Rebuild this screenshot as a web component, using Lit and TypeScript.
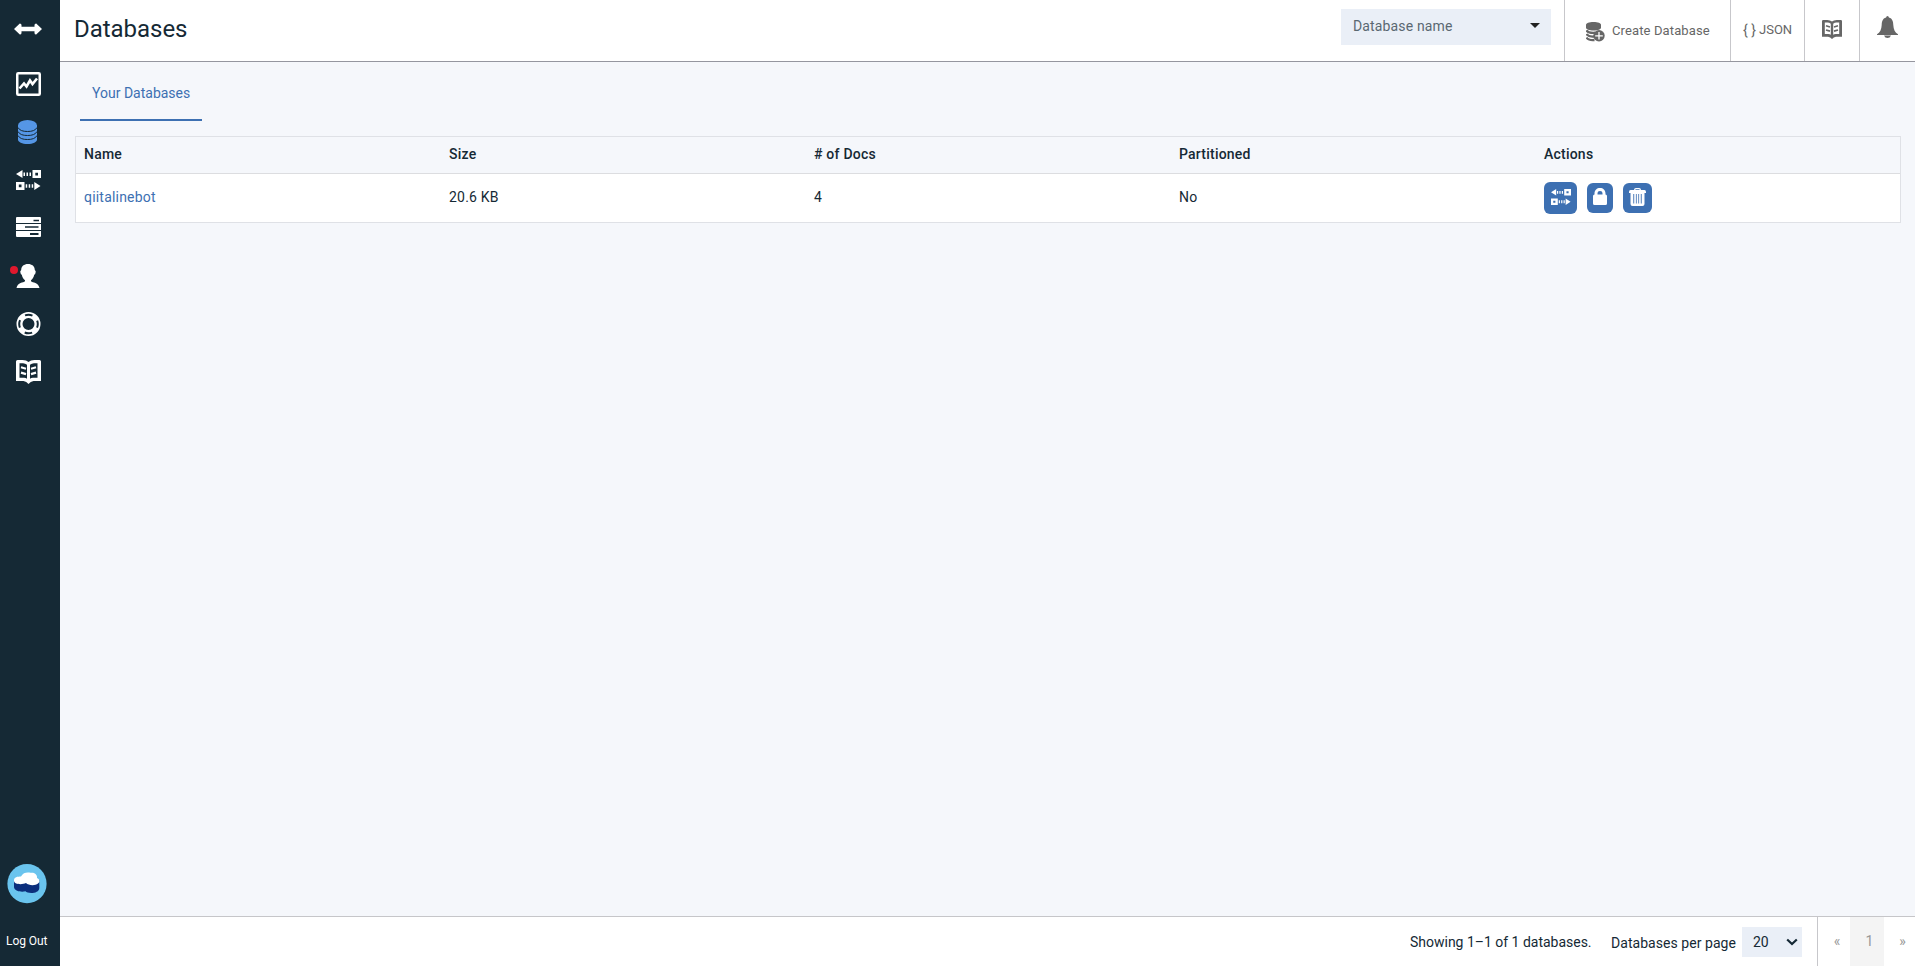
import { LitElement, html, svg, css } from "lit";
import { customElement, property } from "lit/decorators.js";

const book = svg`
  <path fill="currentColor" fill-rule="evenodd" d="M0 1.500Q0 0 1.500 0H6.500Q10.500 0 12.500 2Q14.500 0 18.500 0H23.500Q25 0 25 1.500V21H17.500Q14.500 21.300 12.500 24Q10.500 21.300 7.500 21H0ZM3.500 3.200V17.800H8Q9.800 17.800 11 18.700V4.700Q9 3 6.500 3.200ZM21.500 3.200V17.800H17Q15.200 17.800 14 18.700V4.700Q16 3 18.500 3.200Z"/>
  <path stroke="currentColor" stroke-width="2.200" fill="none" d="M5 7.300L10 8.800M5 12.600L10 14.100M20 7.300L15 8.800M20 12.600L15 14.100"/>`;

const replicate = svg`
  <path fill="currentColor" fill-rule="evenodd" d="M0 4L6.500 0V8ZM7.500 2.500H9V6H7.500ZM10.500 2.500H12V6H10.500ZM13.500 2.500H15V6H13.500ZM16.500 0H25V8H16.500ZM19.300 2.700V5.400H22V2.700ZM0 12H8.500V20H0ZM2.800 14.600V17.300H5.500V14.600ZM9.700 14.200H11.200V17.700H9.700ZM12.700 14.200H14.200V17.700H12.700ZM15.700 14.200H17.200V17.700H15.700ZM18.300 12L24.500 16L18.300 20Z"/>`;

const icons = {
  arrows: svg`<svg width="28" height="12" viewBox="0 0 28 12"><path fill="currentColor" d="M0 6L5.800 .4Q7.500 .4 7.500 2V3.700H20.500V2Q20.500 .4 22.200 .4L28 6L22.200 11.600Q20.500 11.600 20.500 10V8.300H7.500V10Q7.500 11.600 5.800 11.600Z"/></svg>`,
  chart: svg`<svg width="25" height="24" viewBox="0 0 25 24"><rect x="1.250" y="1.250" width="22.500" height="21.500" rx="1" fill="none" stroke="currentColor" stroke-width="2.500"/><path fill="none" stroke="currentColor" stroke-width="2.600" d="M3.500 16.500L8 11.500L10.500 14.500L14 8.500L16.500 12L21 6.500"/></svg>`,
  database: svg`<svg width="19" height="24" viewBox="0 0 19 24"><path fill="currentColor" d="M0 5V19.500C0 22 4 24 9.500 24S19 22 19 19.500V5Z"/><ellipse cx="9.500" cy="5.500" rx="9.500" ry="5.500" fill="currentColor"/><path fill="none" stroke="#152935" stroke-width="1" d="M0 7.500C1.500 10.500 5 11.500 9.500 11.500S17.500 10.500 19 7.500M0 11.500C1.500 14.500 5 15.500 9.500 15.500S17.500 14.500 19 11.500M0 15.500C1.500 18.500 5 19.500 9.500 19.500S17.500 18.500 19 15.500"/></svg>`,
  replicate: svg`<svg width="25" height="20" viewBox="0 0 25 20">${replicate}</svg>`,
  servers: svg`<svg width="25" height="20" viewBox="0 0 25 20"><path fill="currentColor" fill-rule="evenodd" d="M1 0H24Q25 0 25 1V6H0V1Q0 0 1 0ZM17.500 2.700V4.200H23V2.700ZM0 7H25V13H0ZM9 9.200V10.800H22.500V9.200ZM0 14H25V19Q25 20 24 20H1Q0 20 0 19ZM14 16V18H22.500V16Z"/></svg>`,
  person: svg`<svg width="24" height="24" viewBox="0 0 24 24"><path fill="currentColor" d="M12 0C16 0 18.800 2.200 18.800 6Q20.300 7 19.500 9Q19.200 10.500 18.200 10.800C17.800 13.500 16.500 15 15 16.300V17.300C16.500 18.800 22.500 18.500 23.500 24H.5C1.500 18.500 7.500 18.800 9 17.300V16.300C7.500 15 6.200 13.500 5.800 10.800Q4.800 10.500 4.500 9Q3.700 7 5.200 6C5.200 2.200 8 0 12 0Z"/></svg>`,
  support: svg`<svg width="25" height="24" viewBox="0 0 25 24"><circle cx="12.500" cy="12" r="9" fill="none" stroke="currentColor" stroke-width="6"/><circle cx="12.500" cy="12" r="9.300" fill="none" stroke="#152935" stroke-width="2" stroke-dasharray="7.600 7.008" stroke-dashoffset="3.800"/></svg>`,
  book: svg`<svg width="25" height="24" viewBox="0 0 25 24">${book}</svg>`,
};

@customElement("side-nav")
export class SideNav extends LitElement {
  static styles = css`
    :host { display: flex; flex-direction: column; width: 60px; background: #152935; color: #fff; }
    .item { display: flex; align-items: center; box-sizing: border-box; height: 48px; padding-left: 16px; position: relative; }
    .toggle { height: 59px; padding: 0 0 1px 14px; margin-bottom: 1px; }
    .active { color: #5596e6; padding-left: 18px; }
    .servers { padding-bottom: 2px; }
    .dot { position: absolute; left: 10px; top: 14px; width: 8px; height: 8px; border-radius: 50%; background: #e0182d; }
    .logo { margin-top: auto; padding-left: 7px; height: 40px; }
    .logout { margin: 29px 0 17px; padding-left: 6px; font-size: 12px; line-height: 16px; letter-spacing: -.05px; white-space: nowrap; }
    svg { display: block; }
  `;
  render() {
    const entries = ["chart", "database", "replicate", "servers", "person", "support", "book"] as const;
    return html`
      <div class="item toggle">${icons.arrows}</div>
      ${entries.map((name) => html`<div class="item ${name} ${name === "database" ? "active" : ""}">
        ${icons[name]}${name === "person" ? html`<span class="dot"></span>` : ""}
      </div>`)}
      <div class="logo">
        <svg width="40" height="40" viewBox="0 0 40 40">
          <circle cx="20" cy="19.700" r="19.600" fill="#6ac4ee"/>
          <path fill="#0b2e7c" d="M7 16H32.300V24C32.300 30 20.500 30 18.500 27.300C14 28.500 7 27 7 23Z"/>
          <path fill="#fff" d="M7 17C6.500 13 11 12.500 14 12.500C16 8 21 8 23.500 8.800C28 8 30.500 11 30 14C32.500 15 33.500 18 31 19.500C28 22 21.500 21.500 19 19C15 21 7.500 20.500 7 17Z"/>
        </svg>
      </div>
      <div class="logout">Log Out</div>`;
  }
}

@customElement("top-bar")
export class TopBar extends LitElement {
  static styles = css`
    :host { display: flex; height: 61px; background: #fff; border-bottom: 1px solid #95969f; }
    .title { flex: 1; margin: 0; padding: 13px 0 0 14px; font-size: 24px; line-height: 32px; font-weight: 400; letter-spacing: -.03px; }
    .search { display: flex; align-items: center; justify-content: space-between; box-sizing: border-box; width: 210px; height: 36px; margin: 9px 13px 0 0; padding: 0 11px 0 12px; background: #eaeff7; color: #5a6872; font-size: 14px; }
    .label { padding-bottom: 2px; letter-spacing: .15px; }
    .caret { border: 5px solid transparent; border-top-color: #222; border-bottom: 0; margin-bottom: 3px; }
    .cell { display: flex; box-sizing: border-box; border-left: 1px solid #c7c7cb; color: #666; white-space: nowrap; }
    .create { width: 166px; padding: 22px 0 0 21px; font-size: 13px; line-height: 18px; }
    .create span { padding-left: 7px; letter-spacing: .12px; }
    .json { width: 74px; padding: 21px 0 0 12px; font-size: 13px; line-height: 18px; }
    .braces { width: 16px; font-size: 14px; }
    .docs { width: 55px; padding: 20px 0 0 17px; }
    .bell { width: 56px; padding: 16px 0 0 17px; }
  `;
  render() {
    return html`
      <h1 class="title">Databases</h1>
      <div class="search"><span class="label">Database name</span><span class="caret"></span></div>
      <div class="cell create">
        <svg width="19" height="20" viewBox="0 0 19 20">
          <path fill="currentColor" d="M0 3C0 1 3 0 7.500 0S15 1 15 3V5.500C15 7.500 12 8.500 7.500 8.500S0 7.500 0 5.500Z"/>
          <path fill="none" stroke="currentColor" stroke-width="2.400" d="M.5 8.300C2 11 6 11 9 10.800M.5 12C2 14.500 5 14.800 8 14.500M.5 15.500C2 18 5 18.300 8.500 18"/>
          <circle cx="13" cy="13.800" r="5.700" fill="currentColor"/>
          <path stroke="#fff" stroke-width="1.300" d="M13 10V17.600M9.200 13.800H16.800"/>
        </svg>
        <span>Create Database</span>
      </div>
      <div class="cell json"><span class="braces">{ }</span><span class="word">JSON</span></div>
      <div class="cell docs"><svg width="20" height="19" viewBox="0 0 25 24" preserveAspectRatio="none">${book}</svg></div>
      <div class="cell bell">
        <svg width="21" height="22" viewBox="0 0 21 22"><path fill="currentColor" d="M10.500 0Q11.800 0 11.900 1.600C15.500 2.400 16.200 6 16.300 9C16.500 13.500 18 16.500 21 18.200V19H0V18.200C3 16.500 4.500 13.500 4.700 9C4.800 6 5.500 2.400 9.100 1.600Q9.200 0 10.500 0ZM7 19.500H14Q13 22 10.500 22T7 19.500Z"/></svg>
      </div>`;
  }
}

@customElement("database-table")
export class DatabaseTable extends LitElement {
  static styles = css`
    :host { display: block; border: 1px solid #dfe1e6; font-size: 14px; line-height: 18px; }
    .row { display: grid; grid-template-columns: repeat(5, 365px); align-items: center; height: 48px; background: #fff; }
    .head { height: 36px; background: #f5f7fb; border-bottom: 1px solid #dcdde0; font-weight: 500; }
    .cell { padding-left: 8px; letter-spacing: .2px; }
    .head .cell { padding-bottom: 2px; letter-spacing: .22px; }
    .text { padding-bottom: 2px; }
    .link { color: #3d70b2; }
    .actions { display: flex; align-items: center; gap: 10px; padding: 0 0 1px 8px; }
    .btn { display: flex; align-items: center; justify-content: center; height: 30px; border-radius: 6px; background: #3d70b2; color: #fff; }
    .wide { width: 33px; height: 32px; }
    .lock { width: 26px; }
    .trash { width: 29px; }
    .btn svg { margin-bottom: 2px; }
  `;
  @property({ attribute: false }) rows = [{ name: "qiitalinebot", size: "20.6 KB", docs: "4", partitioned: "No" }];
  render() {
    return html`
      <div class="row head">
        ${["Name", "Size", "# of Docs", "Partitioned", "Actions"].map((t) => html`<div class="cell">${t}</div>`)}
      </div>
      ${this.rows.map((r) => html`<div class="row">
        <div class="cell text link">${r.name}</div>
        <div class="cell text">${r.size}</div>
        <div class="cell text">${r.docs}</div>
        <div class="cell text">${r.partitioned}</div>
        <div class="actions">
          <span class="btn wide"><svg width="20" height="16" viewBox="0 0 25 20">${replicate}</svg></span>
          <span class="btn lock"><svg width="14" height="17" viewBox="0 0 14 17"><path fill="currentColor" fill-rule="evenodd" d="M1.500 6.500V5.500C1.500 2 4 0 7 0S12.500 2 12.500 5.500V6.500Q14 6.500 14 8V15.500Q14 17 12.500 17H1.500Q0 17 0 15.500V8Q0 6.500 1.500 6.500ZM4.500 6.500H9.500V5.500C9.500 3.800 8.500 3 7 3S4.500 3.800 4.500 5.500Z"/></svg></span>
          <span class="btn trash"><svg width="17" height="18" viewBox="0 0 17 18"><path fill="currentColor" fill-rule="evenodd" d="M5 2Q5 0 7 0H10Q12 0 12 2H15.500Q17 2 17 4V5H0V4Q0 2 1.500 2ZM6.500 2H10.500V1.300H6.500ZM1.500 5H15.500V16Q15.500 18 13.500 18H3.500Q1.500 18 1.500 16ZM4.300 6V15.500H5.200V6ZM6.900 6V15.500H7.700V6ZM9.300 6V15.500H10.100V6ZM11.800 6V15.500H12.700V6Z"/></svg></span>
        </div>
      </div>`)}`;
  }
}

@customElement("page-footer")
export class PageFooter extends LitElement {
  static styles = css`
    :host { display: flex; justify-content: flex-end; height: 49px; background: #fff; border-top: 1px solid #c6c6c9; font-size: 14px; line-height: 18px; white-space: nowrap; }
    .showing { width: 201px; padding-top: 16px; letter-spacing: -.01px; }
    .per { width: 131px; padding-top: 17px; letter-spacing: .05px; }
    .select { display: flex; align-items: center; justify-content: space-between; box-sizing: border-box; width: 60px; height: 30px; margin: 10px 15px 0 0; padding: 0 4px 0 11px; background: #eaeff7; }
    .pages { display: flex; width: 97px; border-left: 1px solid #c7c7cb; color: #999; text-align: center; }
    .page { box-sizing: border-box; width: 32px; padding: 15px 0 0 6px; }
    .current { background: #f4f4f4; padding-left: 5px; width: 34px; }
    .next { width: 31px; }
  `;
  render() {
    return html`
      <div class="showing">Showing 1–1 of 1 databases.</div>
      <div class="per">Databases per page</div>
      <div class="select"><span>20</span><svg width="12" height="8" viewBox="0 0 12 8"><path fill="none" stroke="#152935" stroke-width="2.200" d="M1.200 1.500L6 6L10.800 1.500"/></svg></div>
      <div class="pages"><span class="page">«</span><span class="page current">1</span><span class="page next">»</span></div>`;
  }
}

@customElement("app-root")
export class AppRoot extends LitElement {
  static styles = css`
    :host { display: flex; height: 966px; overflow: hidden; background: #f5f7fb; color: #152935; font-family: Roboto, "Liberation Sans", sans-serif; }
    .main { flex: 1; display: flex; flex-direction: column; min-width: 0; }
    .content { flex: 1; padding: 0 14px 0 15px; }
    .tab { box-sizing: border-box; width: 122px; height: 59px; margin: 0 0 15px 5px; padding: 22px 0 0 12px; border-bottom: 2px solid #3d70b2; color: #3d70b2; font-size: 14px; line-height: 18px; white-space: nowrap; }
  `;
  render() {
    return html`
      <side-nav></side-nav>
      <div class="main">
        <top-bar></top-bar>
        <div class="content">
          <div class="tab">Your Databases</div>
          <database-table></database-table>
        </div>
        <page-footer></page-footer>
      </div>`;
  }
}
